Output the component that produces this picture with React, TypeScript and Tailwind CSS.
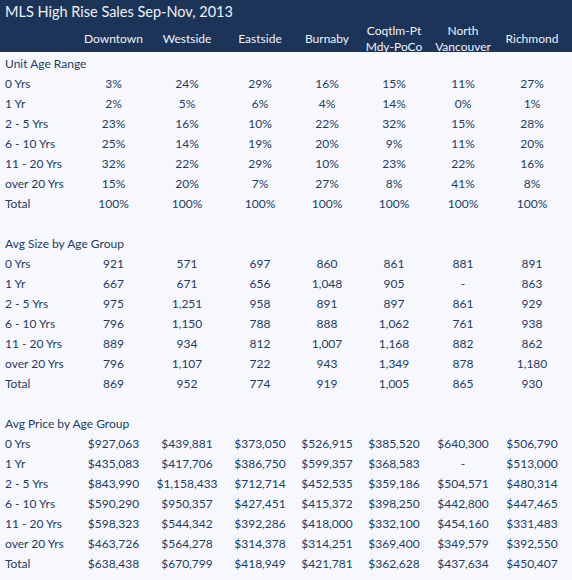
import React from 'react';

const cols = ['Downtown', 'Westside', 'Eastside', 'Burnaby', 'Coqtlm-Pt\nMdy-PoCo', 'North\nVancouver', 'Richmond'];
const ages = ['0 Yrs', '1 Yr', '2 - 5 Yrs', '6 - 10 Yrs', '11 - 20 Yrs', 'over 20 Yrs', 'Total'];

const sections: { title: string; rows: string[][] }[] = [
  {
    title: 'Unit Age Range',
    rows: [
      ['3%', '24%', '29%', '16%', '15%', '11%', '27%'],
      ['2%', '5%', '6%', '4%', '14%', '0%', '1%'],
      ['23%', '16%', '10%', '22%', '32%', '15%', '28%'],
      ['25%', '14%', '19%', '20%', '9%', '11%', '20%'],
      ['32%', '22%', '29%', '10%', '23%', '22%', '16%'],
      ['15%', '20%', '7%', '27%', '8%', '41%', '8%'],
      ['100%', '100%', '100%', '100%', '100%', '100%', '100%'],
    ],
  },
  {
    title: 'Avg Size by Age Group',
    rows: [
      ['921', '571', '697', '860', '861', '881', '891'],
      ['667', '671', '656', '1,048', '905', '-', '863'],
      ['975', '1,251', '958', '891', '897', '861', '929'],
      ['796', '1,150', '788', '888', '1,062', '761', '938'],
      ['889', '934', '812', '1,007', '1,168', '882', '862'],
      ['796', '1,107', '722', '943', '1,349', '878', '1,180'],
      ['869', '952', '774', '919', '1,005', '865', '930'],
    ],
  },
  {
    title: 'Avg Price by Age Group',
    rows: [
      ['$927,063', '$439,881', '$373,050', '$526,915', '$385,520', '$640,300', '$506,790'],
      ['$435,083', '$417,706', '$386,750', '$599,357', '$368,583', '-', '$513,000'],
      ['$843,990', '$1,158,433', '$712,714', '$452,535', '$359,186', '$504,571', '$480,314'],
      ['$590,290', '$950,357', '$427,451', '$415,372', '$398,250', '$442,800', '$447,465'],
      ['$598,323', '$544,342', '$392,286', '$418,000', '$332,100', '$454,160', '$331,483'],
      ['$463,726', '$564,278', '$314,378', '$314,251', '$369,400', '$349,579', '$392,550'],
      ['$638,438', '$670,799', '$418,949', '$421,781', '$362,628', '$437,634', '$450,407'],
    ],
  },
];

const grid = 'grid grid-cols-[77px_73px_74px_72px_62px_72px_66px_72px]';

export default function App() {
  return (
    <div className="w-[572px] h-[580px] bg-[#f6f8fe] text-[#233b63] font-['Lato','Liberation_Sans',sans-serif] text-[12px] overflow-hidden">
      {/* Header */}
      <div className="bg-[#1b3457] text-[#eef2f9] h-[52px]">
        <div className="h-[23px] pl-[5px] flex items-center text-[14.5px]">MLS High Rise Sales Sep-Nov, 2013</div>
        <div className={`${grid} h-[28px] items-center leading-4`}>
          <div />
          {cols.map((c) => (
            <div key={c} className="text-center whitespace-pre-line">{c}</div>
          ))}
        </div>
      </div>

      {/* Sections */}
      <div className="pt-[2px]">
        {sections.map((s, i) => (
          <div key={s.title} className={i > 0 ? 'mt-5' : ''}>
            <div className="h-5 pl-[5px] flex items-center">{s.title}</div>
            {s.rows.map((r, j) => (
              <div key={j} className={`${grid} h-5 items-center`}>
                <div className="pl-[5px]">{ages[j]}</div>
                {r.map((v, k) => (
                  <div key={k} className="text-center">{v}</div>
                ))}
              </div>
            ))}
          </div>
        ))}
      </div>
    </div>
  );
}
